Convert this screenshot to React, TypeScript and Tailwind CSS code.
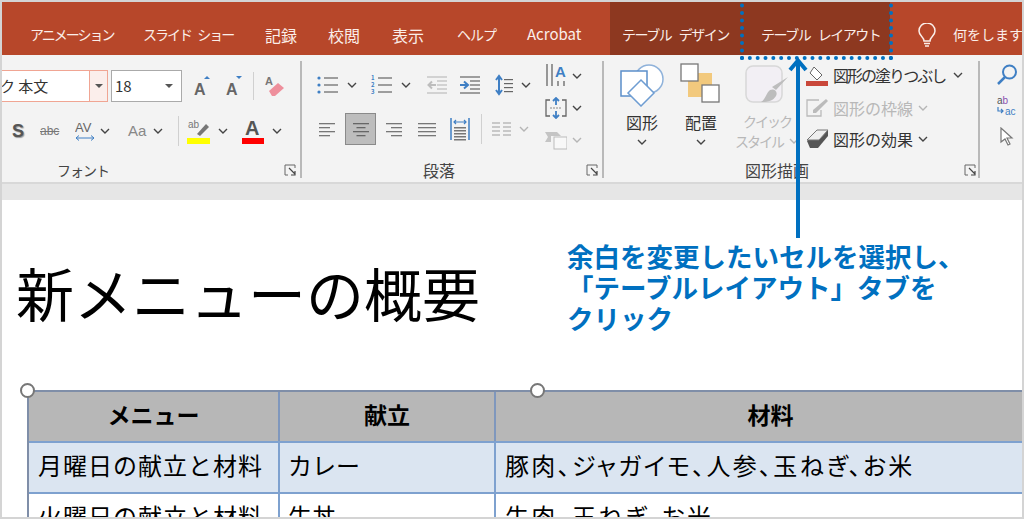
const Chevron = ({ muted = false }: { muted?: boolean }) => (
  <svg width="10" height="6" viewBox="0 0 10 6" className="shrink-0">
    <path d="M1 1l4 4 4-4" fill="none" stroke={muted ? "#b5b5b5" : "#444"} strokeWidth="1.4" />
  </svg>
);

const Launcher = () => (
  <svg width="12" height="12" viewBox="0 0 12 12" className="shrink-0">
    <path d="M11 4V1H1v10h3" fill="none" stroke="#666" strokeWidth="1" />
    <path d="M5 4l6 6M7 11h4V7" fill="none" stroke="#444" strokeWidth="1.2" />
  </svg>
);

// text alignment glyph: rows alternate long / short
const Lines = ({ w = 16, short = 0, align = "left", color = "#777" }: { w?: number; short?: number; align?: "left" | "center" | "right"; color?: string }) => (
  <svg width={w} height="16" viewBox={`0 0 ${w} 16`} className="shrink-0">
    {[2, 6, 10, 14].map((y, i) => {
      const width = i % 2 ? w - short : w;
      const x = align === "left" ? 0 : align === "right" ? w - width : (w - width) / 2;
      return <rect key={y} x={x} y={y} width={width} height="1.3" fill={color} />;
    })}
  </svg>
);

const Bullets = ({ numbered = false }: { numbered?: boolean }) => (
  <svg width="21" height="20" viewBox="0 0 21 20" className="shrink-0">
    {[3, 10, 17].map((y, i) =>
      numbered ? (
        <text key={y} x="0" y={y + 2} fontSize="6" fontWeight="700" fill="#3f7fc4">{i + 1}</text>
      ) : (
        <circle key={y} cx="2" cy={y} r="1.6" fill="#3f7fc4" />
      ),
    )}
    {[3, 10, 17].map((y) => (
      <rect key={y} x="7" y={y - 0.6} width="14" height="1.2" fill="#666" />
    ))}
  </svg>
);

const Indent = ({ out = false }: { out?: boolean }) => (
  <svg width="20" height="18" viewBox="0 0 20 18" className="shrink-0">
    {[1, 5, 9, 13, 17].map((y) => (
      <rect key={y} x={y === 1 || y === 17 ? 0 : 10} y={y - 0.6} width={y === 1 || y === 17 ? 20 : 10} height="1.2" fill={out ? "#bdbdbd" : "#666"} />
    ))}
    <path
      d={out ? "M9 9H2M5 5.5L1.5 9 5 12.5" : "M0 9h7M4 5.5L8 9 4 12.5"}
      fill="none"
      stroke={out ? "#bdbdbd" : "#3f7fc4"}
      strokeWidth="2"
    />
  </svg>
);

const LineSpacing = () => (
  <svg width="18" height="22" viewBox="0 0 18 22" className="shrink-0">
    <path d="M4 2v18M1 6l3-4 3 4M1 16l3 4 3-4" fill="none" stroke="#3f7fc4" strokeWidth="2" />
    {[5, 9, 13, 17].map((y) => (
      <rect key={y} x="9" y={y} width="9" height="1.2" fill="#666" />
    ))}
  </svg>
);

const Tab = ({ className, children }: { className?: string; children: React.ReactNode }) => (
  <span className={`mt-[12px] shrink-0 whitespace-nowrap text-[#fbeee9] ${className ?? ""}`}>{children}</span>
);

const Separator = () => <div className="mb-[4px] mt-[6px] w-[2px] shrink-0 bg-[#b9b9b9]" />;

const GroupLabel = ({ children, width, gap, className }: { children: React.ReactNode; width: number; gap: number; className?: string }) => (
  <div className="mt-auto flex h-[24px] items-center text-[#444]">
    <span className={`text-center ${className ?? "text-[16px]"}`} style={{ width }}>{children}</span>
    <span style={{ width: gap }} />
    <Launcher />
  </div>
);

function FontGroup() {
  return (
    <div className="flex shrink-0">
      <div className="flex w-[300px] shrink-0 flex-col">
        <div className="mt-[15px] flex h-[32px] items-center">
          <div className="flex h-[32px] w-[90px] items-center border border-l-0 border-[#f0a593] bg-white text-[15px] text-[#333]">ク 本文</div>
          <div className="flex h-[32px] w-[18px] items-center justify-center border border-l-0 border-[#f0a593] bg-[#fbeeeb]">
            <svg width="8" height="4" viewBox="0 0 8 4"><path d="M0 0h8L4 4z" fill="#555" /></svg>
          </div>
          <div className="ml-[3px] flex h-[32px] w-[71px] items-center justify-between border border-[#aaa] bg-white pl-[3px] pr-[8px] text-[15px] text-[#333]">
            18
            <svg width="8" height="4" viewBox="0 0 8 4"><path d="M0 0h8L4 4z" fill="#555" /></svg>
          </div>
          <svg width="18" height="22" viewBox="0 0 18 22" className="ml-[12px]">
            <text x="0" y="20" fontSize="16" fontWeight="600" fill="#666" fontFamily="Liberation Sans">A</text>
            <path d="M10 4l3-3 3 3z" fill="#3f7fc4" />
          </svg>
          <svg width="18" height="22" viewBox="0 0 18 22" className="ml-[14px]">
            <text x="0" y="20" fontSize="16" fontWeight="600" fill="#666" fontFamily="Liberation Sans">A</text>
            <path d="M10 1l3 3 3-3z" fill="#3f7fc4" />
          </svg>
          <div className="ml-[9px] h-[28px] w-px bg-[#d0d0d0]" />
          <svg width="20" height="24" viewBox="0 0 20 24" className="ml-[11px]">
            <text x="0" y="11" fontSize="11" fontWeight="600" fill="#777" fontFamily="Liberation Sans">A</text>
            <path d="M4 17l9-8 6 5-9 8H7z" fill="#ee8f9c" />
          </svg>
        </div>
        <div className="mt-[13px] flex h-[32px] items-center font-['Liberation_Sans']">
          <span className="ml-[12px] w-[13px] text-[18px] font-bold text-[#555] [text-shadow:1px_1px_1px_#999]">S</span>
          <span className="ml-[15px] w-[22px] text-[12px] text-[#777] line-through">abc</span>
          <svg width="20" height="22" viewBox="0 0 20 22" className="ml-[13px]">
            <text x="0" y="12" fontSize="13" fill="#666" fontFamily="Liberation Sans">AV</text>
            <path d="M1 18h18M4 15.500L1 18l3 2.500M16 15.500l3 2.500-3 2.500" fill="none" stroke="#3f7fc4" strokeWidth="1" />
          </svg>
          <span className="ml-[5px]"><Chevron /></span>
          <span className="ml-[18px] w-[20px] text-[15px] text-[#888]">Aa</span>
          <span className="ml-[5px]"><Chevron /></span>
          <div className="ml-[15px] h-[30px] w-px bg-[#d0d0d0]" />
          <svg width="23" height="26" viewBox="0 0 23 26" className="ml-[8px]">
            <text x="1" y="10" fontSize="10" fill="#777" fontFamily="Liberation Sans">ab</text>
            <path d="M10 16l9-10 3 3-9 9z" fill="#777" />
            <rect x="0" y="20" width="23" height="6" fill="#ffff00" />
          </svg>
          <span className="ml-[8px]"><Chevron /></span>
          <svg width="22" height="26" viewBox="0 0 22 26" className="ml-[14px]">
            <text x="3" y="17" fontSize="20" fontWeight="600" fill="#555" fontFamily="Liberation Sans">A</text>
            <rect x="0" y="20" width="22" height="6" fill="#ff0000" />
          </svg>
          <span className="ml-[8px]"><Chevron /></span>
        </div>
        <GroupLabel width={166} gap={118} className="text-[14px] tracking-[-1px]">フォント</GroupLabel>
      </div>
      <Separator />
    </div>
  );
}

function ParagraphGroup() {
  return (
    <div className="flex shrink-0">
      <div className="flex w-[300px] shrink-0 flex-col">
        <div className="flex">
          <div className="w-[243px] shrink-0">
            <div className="mt-[17px] flex h-[26px] items-center pl-[15px]">
              <Bullets />
              <span className="ml-[9px]"><Chevron /></span>
              <span className="ml-[14px]"><Bullets numbered /></span>
              <span className="ml-[9px]"><Chevron /></span>
              <span className="ml-[16px]"><Indent out /></span>
              <span className="ml-[13px]"><Indent /></span>
              <span className="ml-[15px]"><LineSpacing /></span>
              <span className="ml-[8px]"><Chevron /></span>
            </div>
            <div className="mt-[15px] flex h-[32px] items-center pl-[17px]">
              <Lines short={5} align="left" />
              <div className="ml-[10px] flex h-[32px] w-[31px] items-center justify-center border border-[#8a8a8a] bg-[#bdbdbd]">
                <Lines short={7} align="center" color="#666" />
              </div>
              <span className="ml-[10px]"><Lines short={5} align="right" /></span>
              <span className="ml-[16px]"><Lines w={18} /></span>
              <svg width="20" height="24" viewBox="0 0 20 24" className="ml-[14px]">
                <path d="M1 1v22M19 1v22" stroke="#3f7fc4" strokeWidth="1.500" />
                <path d="M4 5h12M6 3L4 5l2 2M14 3l2 2-2 2" fill="none" stroke="#3f7fc4" strokeWidth="1.200" />
                {[10, 13, 16, 19, 22].map((y) => <rect key={y} x="4" y={y} width="12" height="1.500" fill="#777" />)}
              </svg>
              <div className="ml-[11px] h-[30px] w-px bg-[#d0d0d0]" />
              <svg width="19" height="16" viewBox="0 0 19 16" className="ml-[10px]">
                {[2, 6, 10, 14].map((y) => <path key={y} d={`M0 ${y}h8M11 ${y}h8`} stroke="#bbb" strokeWidth="1.300" />)}
              </svg>
              <span className="ml-[8px]"><Chevron muted /></span>
            </div>
          </div>
          <div className="flex flex-col pt-[5px]">
            <div className="flex h-[32px] items-center">
              <svg width="22" height="26" viewBox="0 0 22 26">
                <path d="M2 1v22M7 1v22" stroke="#666" strokeWidth="1.300" />
                <path d="M13 18v5M19 18v5" stroke="#666" strokeWidth="1.300" />
                <text x="10" y="14" fontSize="15" fontWeight="600" fill="#3f7fc4" fontFamily="Liberation Sans">A</text>
              </svg>
              <span className="ml-[5px]"><Chevron /></span>
            </div>
            <div className="flex h-[32px] items-center">
              <svg width="22" height="22" viewBox="0 0 22 22">
                <path d="M5 3H1v16h4M17 3h4v16h-4" fill="none" stroke="#666" strokeWidth="1.300" />
                <path d="M11 1v7M8 4l3-3 3 3M11 21v-7M8 18l3 3 3-3" fill="none" stroke="#3f7fc4" strokeWidth="1.800" />
                <path d="M5 11h12" stroke="#888" strokeDasharray="2 1" />
              </svg>
              <span className="ml-[5px]"><Chevron /></span>
            </div>
            <div className="flex h-[32px] items-center">
              <svg width="22" height="20" viewBox="0 0 22 20">
                <path d="M0 2h12l4 4H6v6H0l3-5z" fill="#c4c4c4" />
                <rect x="9" y="7" width="13" height="12" fill="#f8f8f8" stroke="#bbb" />
              </svg>
              <span className="ml-[5px]"><Chevron muted /></span>
            </div>
          </div>
        </div>
        <GroupLabel width={274} gap={10}>段落</GroupLabel>
      </div>
      <Separator />
    </div>
  );
}

const StackedLabel = ({ children }: { children: React.ReactNode }) => (
  <span className="mt-[5px] text-[16px] leading-[20px] text-[#333]">{children}</span>
);

function DrawingGroup() {
  return (
    <div className="flex shrink-0">
      <div className="flex w-[374px] shrink-0 flex-col">
        <div className="flex">
          <div className="flex w-[76px] flex-col items-center pt-[8px]">
            <svg width="44" height="44" viewBox="0 0 44 44">
              <circle cx="29" cy="16" r="14" fill="#fff" stroke="#8fb2da" strokeWidth="1.500" />
              <rect x="1" y="8" width="26" height="25" fill="#fff" stroke="#5b8fca" strokeWidth="1.500" />
              <path d="M21 17l13 13-13 13L8 30z" fill="#fff" stroke="#6e9dd2" strokeWidth="1.500" />
            </svg>
            <StackedLabel>図形</StackedLabel>
            <span className="mt-[7px]"><Chevron /></span>
          </div>
          <div className="flex w-[42px] flex-col items-center pt-[8px]">
            <svg width="42" height="44" viewBox="0 0 42 44">
              <rect x="8" y="10" width="24" height="24" fill="#f2c97d" />
              <rect x="1" y="1" width="17" height="17" fill="#fff" stroke="#777" strokeWidth="1.300" />
              <rect x="22" y="22" width="17" height="17" fill="#fff" stroke="#777" strokeWidth="1.300" />
            </svg>
            <StackedLabel>配置</StackedLabel>
            <span className="mt-[7px]"><Chevron /></span>
          </div>
          <div className="ml-[7px] flex w-[76px] flex-col items-center pt-[8px] text-[#b8b8b8]">
            <svg width="44" height="44" viewBox="0 0 44 44">
              <rect x="1" y="3" width="36" height="36" rx="7" fill="#f2eff4" stroke="#d8d8d8" strokeWidth="1.500" />
              <path d="M43 14L31 27l-4-3zM25 27c5-2 8 2 6 6-3 5-8 6-15 6 5-3 5-9 9-12z" fill="#bdbdbd" />
            </svg>
            <span className="mt-[4px] text-[14px] leading-[20px] tracking-[-2px]">クイック</span>
            <span className="flex items-center gap-[6px] text-[14px] leading-[20px] tracking-[-2px]">スタイル <Chevron muted /></span>
          </div>
          <div className="flex flex-col pl-[1px] pt-[3px] text-[16px] text-[#333]">
            <div className="flex h-[33px] items-center">
              <svg width="23" height="22" viewBox="0 0 23 22">
                <path d="M8 3l8 8-5 5-7-7z" fill="#fff" stroke="#666" />
                <rect x="0" y="17" width="22" height="5" fill="#c9473a" />
              </svg>
              <span className="ml-[4px] tracking-[-2px]">図形の塗りつぶし</span>
              <span className="ml-[8px]"><Chevron /></span>
            </div>
            <div className="flex h-[33px] items-center text-[#b8b8b8]">
              <svg width="23" height="20" viewBox="0 0 23 20">
                <path d="M13 2H1v16h14v-6" fill="none" stroke="#bbb" strokeWidth="1.300" />
                <path d="M7 12L20 1l2 2L10 15H7z" fill="#bbb" />
              </svg>
              <span className="ml-[4px]">図形の枠線</span>
              <span className="ml-[5px]"><Chevron muted /></span>
            </div>
            <div className="flex h-[30px] items-center">
              <svg width="23" height="20" viewBox="0 0 23 20">
                <path d="M1 12L12 1h10v6L12 19H4z" fill="#555" />
                <path d="M1 11L11 1h11l-9 10z" fill="#eee" stroke="#777" />
              </svg>
              <span className="ml-[4px]">図形の効果</span>
              <span className="ml-[5px]"><Chevron /></span>
            </div>
          </div>
        </div>
        <GroupLabel width={346} gap={14}>図形描画</GroupLabel>
      </div>
      <Separator />
    </div>
  );
}

export default function App() {
  return (
    <div className="relative flex h-[519px] w-[1024px] flex-col overflow-hidden bg-white py-[2px] font-['Noto_Sans_CJK_JP',sans-serif]">
      <div className="flex h-[53px] shrink-0 items-center bg-[#b7472a] pl-[30px] text-[14px]">
        <Tab className="w-[113px] tracking-[-2px]">アニメーション</Tab>
        <Tab className="w-[122px] tracking-[-2px] [word-spacing:5px]">スライド ショー</Tab>
        <Tab className="w-[63px] text-[16px]">記録</Tab>
        <Tab className="w-[64px] text-[16px]">校閲</Tab>
        <Tab className="w-[65px] text-[16px]">表示</Tab>
        <Tab className="w-[70px] tracking-[-1px]">ヘルプ</Tab>
        <Tab className="w-[83px] text-[15px]">Acrobat</Tab>
        <div className="flex h-full w-[280px] shrink-0 items-center bg-[#8d3820] pl-[12px]">
          <Tab className="w-[139px] tracking-[-1.500px] [word-spacing:6px]">テーブル デザイン</Tab>
          <Tab className="tracking-[-1.500px] [word-spacing:6px]">テーブル レイアウト</Tab>
        </div>
        <svg width="18" height="24" viewBox="0 0 18 24" className="ml-[28px] mt-[12px] shrink-0">
          <path d="M6 18c0-4-5-5-5-10a8 8 0 0116 0c0 5-5 6-5 10z" fill="none" stroke="#fbeee9" strokeWidth="1.500" />
          <path d="M6 20.500h6M7 23h4" stroke="#fbeee9" strokeWidth="1.500" />
        </svg>
        <Tab className="ml-[17px]">何をしますか</Tab>
      </div>

      <div className="flex h-[129px] shrink-0 border-b-2 border-[#d8d8d8] bg-[#f3f3f3]">
        <FontGroup />
        <ParagraphGroup />
        <DrawingGroup />
        <div className="flex flex-1 flex-col items-start gap-[10px] pl-[17px] pt-[9px]">
          <svg width="21" height="21" viewBox="0 0 21 21">
            <circle cx="12.500" cy="8" r="6.500" fill="none" stroke="#3f7fc4" strokeWidth="2" />
            <path d="M8 13l-7 7" stroke="#3f7fc4" strokeWidth="2.500" />
          </svg>
          <svg width="21" height="22" viewBox="0 0 21 22">
            <text x="0" y="9" fontSize="10" fill="#555" fontFamily="Liberation Sans">a<tspan fill="#8a4fb0">b</tspan></text>
            <path d="M1 12v4h5M4 14l2 2-2 2" fill="none" stroke="#3f7fc4" strokeWidth="1.200" />
            <text x="8" y="20" fontSize="10" fill="#3f7fc4" fontFamily="Liberation Sans">ac</text>
          </svg>
          <svg width="14" height="19" viewBox="0 0 14 19" className="ml-[3px]">
            <path d="M1 1v14l4-3 3 6 2-1-3-6h5z" fill="#fff" stroke="#777" strokeWidth="1.200" />
          </svg>
        </div>
      </div>

      <div className="h-[16px] shrink-0 bg-[#e6e6e6]" />

      <div className="relative flex-1 overflow-hidden bg-white">
        <div className="h-[190px] pl-[16px] pt-[50px] text-[58px] leading-[84px] text-black">新メニューの概要</div>
        <div className="relative ml-[27px] w-[1018px] border-l-2 border-t-2 border-[#7f8ea8]">
          <div className="grid h-[49px] grid-cols-[251px_216px_1fr] items-center bg-[#b7b7b7] text-center text-[23px] font-bold text-black">
            <span className="flex h-full items-center justify-center border-r-2 border-[#7f97bd] pb-[4px]">メニュー</span>
            <span className="flex h-full items-center justify-center border-r-2 border-[#7f97bd] pb-[4px]">献立</span>
            <span className="flex h-full items-center justify-center pb-[4px]">材料</span>
          </div>
          <div className="grid h-[51px] grid-cols-[251px_216px_1fr] items-center border-t-2 border-[#7ea1cf] bg-[#dbe5f1] text-[24px] text-black">
            <span className="flex h-full items-center border-r-2 border-[#7ea1cf] pb-[5px] pl-[9px] tracking-[1px]">月曜日の献立と材料</span>
            <span className="flex h-full items-center border-r-2 border-[#7ea1cf] pb-[5px] pl-[8px]">カレー</span>
            <span className="flex h-full items-center pb-[5px] pl-[9px] tracking-[2.300px] [font-feature-settings:'palt']">豚肉、ジャガイモ、人参、玉ねぎ、お米</span>
          </div>
          <div className="grid h-[51px] grid-cols-[251px_216px_1fr] items-center border-t-2 border-[#7ea1cf] bg-white text-[24px] text-black">
            <span className="flex h-full items-center border-r-2 border-[#7ea1cf] pb-[5px] pl-[9px] tracking-[1px]">火曜日の献立と材料</span>
            <span className="flex h-full items-center border-r-2 border-[#7ea1cf] pb-[5px] pl-[8px]">牛丼</span>
            <span className="flex h-full items-center pb-[5px] pl-[9px] tracking-[2.300px] [font-feature-settings:'palt']">牛肉、玉ねぎ、お米</span>
          </div>
          <span className="absolute -left-[9px] -top-[9px] h-[15px] w-[15px] rounded-full border-2 border-[#777] bg-white" />
          <span className="absolute -top-[9px] left-[501px] h-[15px] w-[15px] rounded-full border-2 border-[#777] bg-white" />
        </div>
      </div>

      <div className="absolute left-[740px] top-[-4px] h-[64px] w-[153px] border-[4px] border-dotted border-[#0070c0]" />
      <div className="absolute left-[788px] top-[58px] flex h-[180px] w-[20px] flex-col items-center">
        <svg width="20" height="14" viewBox="0 0 20 14" className="-mb-[11px] shrink-0">
          <path d="M2 12L10 2.500 18 12" fill="none" stroke="#0070c0" strokeWidth="4" />
        </svg>
        <div className="w-[4px] flex-1 bg-[#0070c0]" />
      </div>
      <div className="absolute left-[567px] top-[240px] w-[440px] text-[26.500px] font-bold leading-[31px] text-[#0070c0]">
        余白を変更したいセルを選択し、
        <br />
        「テーブルレイアウト」タブを
        <br />
        クリック
      </div>
      <div className="pointer-events-none absolute inset-0 border-2 border-[#d4d4d4]" />
    </div>
  );
}
